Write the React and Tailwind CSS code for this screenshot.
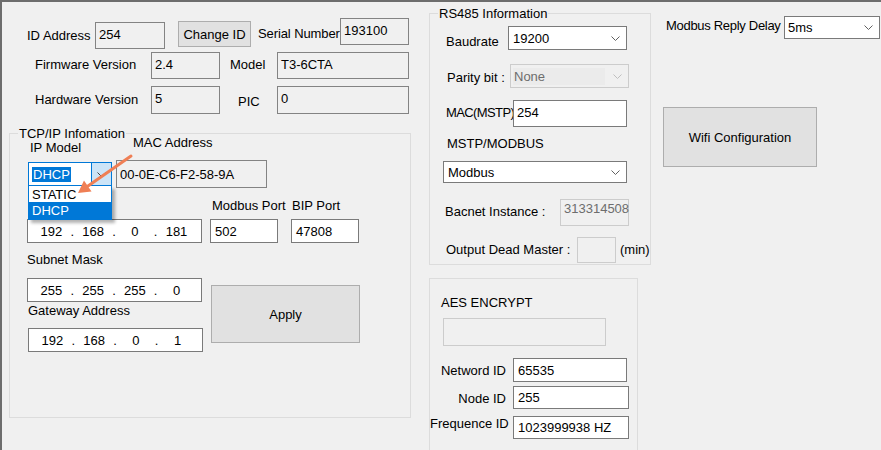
import React from 'react';

const Chevron = ({ color = '#606060' }) => (
  <svg width="9" height="5" viewBox="0 0 9 5" className="shrink-0">
    <path d="M0.5 0.5 L4.5 4.5 L8.5 0.5" fill="none" stroke={color} strokeWidth="1" />
  </svg>
);

// read-only edit, text sits near the top
const ReadBox = ({ value, className = '' }) => (
  <div className={`border border-[#838383] pl-[3px] pt-[4px] whitespace-nowrap overflow-hidden ${className}`}>{value}</div>
);

const Edit = ({ value, className = '' }) => (
  <div className={`flex items-center border border-[#7a7a7a] bg-white pl-[4px] whitespace-nowrap overflow-hidden ${className}`}>{value}</div>
);

const Combo = ({ value, className = '' }) => (
  <div className={`flex items-center justify-between border border-[#7a7a7a] bg-white pl-[4px] pr-[6px] ${className}`}>
    <span>{value}</span>
    <Chevron />
  </div>
);

const Button = ({ children, className = '' }) => (
  <div className={`flex items-center justify-center border border-[#adadad] bg-[#e1e1e1] ${className}`}>{children}</div>
);

const IpBox = ({ parts, className = '' }) => (
  <div className={`flex items-center border border-[#7a7a7a] bg-white ${className}`}>
    <div className="flex w-[160px] ml-[6px]">
      {parts.map((p, i) => (
        <React.Fragment key={i}>
          <span className="w-[36px] text-center">{p}</span>
          {i < 3 && <span className="w-[7px] text-center">.</span>}
        </React.Fragment>
      ))}
    </div>
  </div>
);

const Group = ({ title, className = '', children }) => (
  <div className={`relative border border-[#dcdcdc] ${className}`}>
    {title && <span className="absolute left-[8px] top-[-8px] px-[1px] bg-[#f0f0f0] whitespace-nowrap">{title}</span>}
    {children}
  </div>
);

export default function App() {
  return (
    <div className="relative w-[881px] h-[450px] overflow-hidden bg-[#f0f0f0] border-t-2 border-l-2 border-[#6d6d6d] font-['Liberation_Sans',Arial,sans-serif] text-[13px] leading-[15px] text-black">
      <div className="flex items-start">
        {/* left column */}
        <div className="ml-[7px] w-[402px] shrink-0 flex flex-col">
          <div className="flex items-start mt-[16px]">
            <span className="ml-[18px] w-[68px] mt-[10px] whitespace-nowrap">ID Address</span>
            <ReadBox value="254" className="w-[70px] h-[27px] mt-[4px]" />
            <Button className="ml-[13px] w-[73px] h-[26px] mt-[3px]">Change ID</Button>
            <span className="ml-[7px] w-[82px] mt-[8px] whitespace-nowrap tracking-[-0.1px]">Serial Number</span>
            <ReadBox value="193100" className="w-[69px] h-[27px]" />
          </div>
          <div className="flex items-start mt-[3px]">
            <span className="ml-[26px] w-[116px] mt-[5px]">Firmware Version</span>
            <ReadBox value="2.4" className="w-[69px] h-[27px]" />
            <span className="ml-[10px] w-[47px] mt-[5px]">Model</span>
            <ReadBox value="T3-6CTA" className="w-[132px] h-[27px]" />
          </div>
          <div className="flex items-start mt-[7px]">
            <span className="ml-[26px] w-[116px] mt-[6px]">Hardware Version</span>
            <ReadBox value="5" className="w-[69px] h-[28px]" />
            <span className="ml-[18px] w-[39px] mt-[8px]">PIC</span>
            <ReadBox value="0" className="w-[132px] h-[28px]" />
          </div>

          <Group title="TCP/IP Infomation" className="mt-[19px] h-[285px]">
            <div className="flex items-start mt-[1px]">
              <div className="ml-[18px] w-[84px] flex flex-col">
                <span className="ml-[2px] mt-[5px]">IP Model</span>
                <div className="relative mt-[7px]">
                  <div className="flex items-center h-[24px] w-[84px] border border-[#0078d7] bg-white">
                    <div className="flex-1 pl-[3px]">
                      <span className="bg-[#0078d7] text-white px-[1px]">DHCP</span>
                    </div>
                    <div className="flex items-center justify-center w-[20px] h-full bg-[#cce4f7] border-l border-[#0078d7]">
                      <Chevron color="#404040" />
                    </div>
                  </div>
                  <div className="absolute left-0 top-[24px] w-[84px] border border-[#0078d7] border-t-0 bg-white shadow-[3px_3px_3px_rgba(0,0,0,0.3)] z-10">
                    <div className="h-[16px] pl-[3px] flex items-center">STATIC</div>
                    <div className="h-[17px] pl-[3px] flex items-center bg-[#0078d7] text-white">DHCP</div>
                  </div>
                </div>
              </div>
              <div className="ml-[4px] w-[151px] flex flex-col">
                <span className="ml-[17px]">MAC Address</span>
                <div className="mt-[10px] h-[28px] border border-[#838383] pl-[3px] pt-[6px]">00-0E-C6-F2-58-9A</div>
              </div>
            </div>
            <div className="flex mt-[10px]">
              <span className="ml-[202px] w-[80px]">Modbus Port</span>
              <span>BIP Port</span>
            </div>
            <div className="flex mt-[6px]">
              <IpBox parts={['192', '168', '0', '181']} className="ml-[17px] w-[175px] h-[24px]" />
              <Edit value="502" className="ml-[8px] w-[68px] h-[24px]" />
              <Edit value="47808" className="ml-[13px] w-[68px] h-[24px]" />
            </div>
            <div className="flex items-start mt-[9px]">
              <div className="ml-[17px] w-[176px] flex flex-col">
                <span>Subnet Mask</span>
                <IpBox parts={['255', '255', '255', '0']} className="mt-[11px] w-[175px] h-[24px]" />
                <span className="ml-[1px] mt-[1px]">Gateway Address</span>
                <IpBox parts={['192', '168', '0', '1']} className="ml-[1px] mt-[10px] w-[175px] h-[24px]" />
              </div>
              <Button className="ml-[8px] mt-[33px] w-[149px] h-[58px]">Apply</Button>
            </div>
          </Group>
        </div>

        {/* middle column */}
        <div className="ml-[18px] w-[222px] shrink-0 flex flex-col mt-[11px]">
          <Group title="RS485 Information" className="h-[252px]">
            <div className="flex items-start mt-[12px]">
              <span className="ml-[16px] w-[62px] mt-[8px]">Baudrate</span>
              <Combo value="19200" className="w-[119px] h-[24px]" />
            </div>
            <div className="flex items-start mt-[14px]">
              <span className="ml-[17px] w-[63px] mt-[6px] whitespace-nowrap">Parity bit :</span>
              <div className="flex items-center justify-between w-[119px] h-[24px] border border-[#cccccc] pr-[6px]">
                <div className="ml-[2px] w-[92px] h-[17px] bg-[#ebebeb] pl-[1px] text-[#6d6d6d] flex items-center">None</div>
                <Chevron color="#bfbfbf" />
              </div>
            </div>
            <div className="flex items-start mt-[12px]">
              <span className="ml-[16px] w-[67px] mt-[5px] whitespace-nowrap tracking-[-0.6px]">MAC(MSTP)</span>
              <div className="w-[114px] h-[27px] border border-[#7a7a7a] bg-white pl-[3px] pt-[4px]">254</div>
            </div>
            <span className="block ml-[17px] mt-[9px]">MSTP/MODBUS</span>
            <Combo value="Modbus" className="ml-[13px] mt-[10px] w-[184px] h-[22px]" />
            <div className="flex items-start mt-[16px]">
              <span className="ml-[15px] w-[115px] mt-[5px] whitespace-nowrap">Bacnet Instance :</span>
              <div className="w-[69px] h-[27px] border border-[#cccccc] pl-[3px] pt-[1px] text-[#6d6d6d]">313314508</div>
            </div>
            <div className="flex items-start mt-[11px]">
              <span className="ml-[16px] w-[131px] mt-[5px] whitespace-nowrap">Output Dead Master :</span>
              <div className="w-[39px] h-[26px] border border-[#cccccc]" />
              <span className="ml-[4px] mt-[5px] whitespace-nowrap">(min)</span>
            </div>
          </Group>

          <Group className="mt-[13px] w-[209px] h-[180px]">
            <span className="block ml-[11px] mt-[16px]">AES ENCRYPT</span>
            <div className="ml-[13px] mt-[8px] w-[163px] h-[28px] border border-[#cccccc]" />
            <div className="flex items-start mt-[12px]">
              <span className="w-[76px] mt-[5px] text-right">Netword ID</span>
              <Edit value="65535" className="ml-[7px] w-[114px] h-[24px]" />
            </div>
            <div className="flex items-start mt-[4px]">
              <span className="w-[76px] mt-[5px] text-right">Node ID</span>
              <Edit value="255" className="ml-[7px] w-[116px] h-[23px]" />
            </div>
            <div className="flex items-start mt-[7px]">
              <span className="w-[76px] text-right whitespace-nowrap">Frequence ID</span>
              <Edit value="1023999938 HZ" className="ml-[7px] w-[116px] h-[23px]" />
            </div>
          </Group>
        </div>

        {/* right column */}
        <div className="ml-[12px] w-[217px] shrink-0 flex flex-col">
          <div className="flex items-start mt-[14px]">
            <span className="ml-[3px] w-[118px] mt-[2px] whitespace-nowrap tracking-[-0.3px]">Modbus Reply Delay</span>
            <div className="flex items-center justify-between w-[96px] h-[23px] border border-[#7a7a7a] bg-white pl-[3px] pr-[6px]">
              <span>5ms</span>
              <Chevron />
            </div>
          </div>
          <Button className="mt-[68px] w-[154px] h-[60px]">Wifi Configuration</Button>
        </div>
      </div>

      {/* annotation arrow */}
      <svg className="absolute left-[68px] top-[148px] pointer-events-none z-20" width="70" height="50" viewBox="0 0 70 50">
        <line x1="61" y1="6" x2="18" y2="36" stroke="#ef7f55" strokeWidth="3" strokeLinecap="round" />
        <polygon points="8,43 21.5,41.5 14,30.5" fill="#ef7f55" />
      </svg>
    </div>
  );
}
